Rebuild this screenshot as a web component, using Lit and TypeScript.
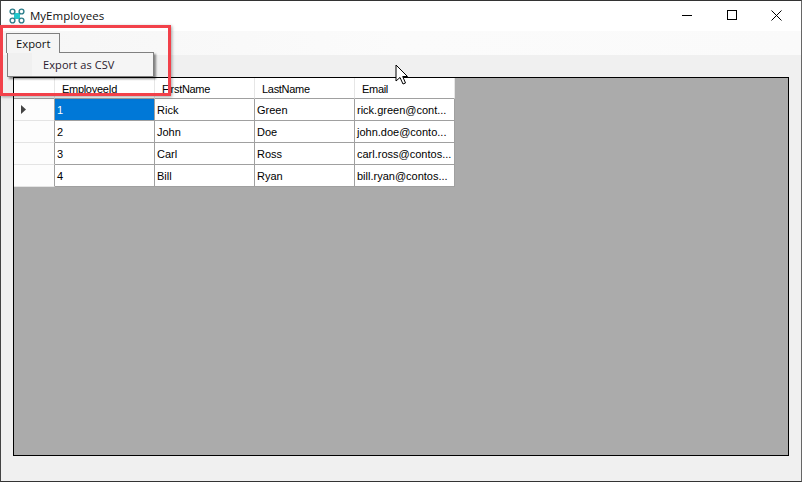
import { LitElement, html, css } from "lit";
import { customElement } from "lit/decorators.js";

const rows = [
  ["1", "Rick", "Green", "rick.green@cont..."],
  ["2", "John", "Doe", "john.doe@conto..."],
  ["3", "Carl", "Ross", "carl.ross@contos..."],
  ["4", "Bill", "Ryan", "bill.ryan@contos..."],
];
const heads = ["EmployeeId", "FirstName", "LastName", "Email"];

@customElement("app-root")
export class AppRoot extends LitElement {
  static styles = css`
    :host { display: block; width: 802px; height: 482px; overflow: hidden; }
    * { box-sizing: border-box; }
    .win { position: relative; width: 802px; height: 482px; display: flex; flex-direction: column;
      background: #f0f0f0; border: 1px solid #555; border-top-color: #333; border-left-color: #444;
      border-bottom-color: #333; border-right-color: #666; }
    .title { height: 30px; flex: none; background: #fff; display: flex; align-items: center; padding-left: 8px;
      font: 11.5px "Open Sans", "Noto Sans", sans-serif; color: #111; }
    .title .ico { width: 16px; height: 16px; margin-right: 5px; flex: none; }
    .title .name { flex: 1; padding-bottom: 1px; }
    .btns { display: flex; margin-right: 2px; }
    .btn { width: 45px; height: 30px; display: flex; align-items: center; justify-content: center; padding-bottom: 2px; }
    .menubar { height: 24px; flex: none; background: linear-gradient(90deg, #f6f6f6, #fbfbfb 50%, #fafafa); }
    .body { flex: 1; padding: 22px 12px 25px 12px; display: flex; min-height: 0; }
    .canvas { flex: 1; background: #ababab; border: 1px solid #000; }
    .grid { display: grid; grid-template-columns: 41px 100px 100px 100px 100px; grid-template-rows: 21px 22px 22px 22px 22px;
      width: 441px; font: 11px "Liberation Sans", Arial, sans-serif; color: #000; }
    .c { background: #fff; border-right: 1px solid #a0a0a0; border-bottom: 1px solid #a0a0a0; display: flex; align-items: center;
      padding-left: 2px; white-space: nowrap; overflow: hidden; }
    .h { background: #fff; padding: 1px 0 0 7px; border-right-color: #e6e6e6; letter-spacing: -0.3px; }
    .rh { background: #fdfdfd; border-bottom-color: #e4e4e4; padding-left: 7px; }
    .corner { border-right-color: #e6e6e6; }
    .sel { background: #0078d7; color: #fff; }
    .rh svg { display: block; }
    .tab { position: absolute; left: 5px; top: 32px; width: 54px; height: 20px; z-index: 3; background: #f5f5f5;
      border: 1px solid #808080; border-bottom: none; font: 11.25px "Open Sans", "Noto Sans", sans-serif; color: #111;
      display: flex; align-items: center; padding-left: 9px; }
    .drop { position: absolute; left: 6px; top: 51px; width: 147px; height: 25px; z-index: 2; background: #f5f5f5;
      border: 1px solid #808080; box-shadow: 2px 2px 2px rgba(0,0,0,.45); display: flex; align-items: center; }
    .gut { width: 24px; height: 100%; background: #f0f0f0; flex: none; }
    .drop .lbl { font: 11px "Open Sans", "Noto Sans", sans-serif; color: #2b1a2e; margin-left: 11px; letter-spacing: .1px; }
    .hl { position: absolute; left: -1px; top: 24px; width: 171px; height: 71px; z-index: 4; border: 3px solid #f2414a;
      box-shadow: 1px 1px 3px rgba(0,0,0,.35); pointer-events: none; }
    .cursor { position: absolute; left: 394px; top: 63px; z-index: 5; }
  `;

  render() {
    return html`<div class="win">
      <div class="title">
        <svg class="ico" viewBox="0 0 16 16">
          <path d="M3.5 3.5 L12.5 12.5 M12.5 3.5 L3.5 12.5" stroke="#1fa5aa" stroke-width="1.8" fill="none"/>
          <rect x="5" y="5" width="6" height="6" fill="#22c8cc"/>
          <circle cx="3.5" cy="3.5" r="2.4" fill="#fff" stroke="#2f7f8c" stroke-width="1.4"/>
          <circle cx="12.5" cy="3.5" r="2.4" fill="#fff" stroke="#2f7f8c" stroke-width="1.4"/>
          <circle cx="3.5" cy="12.5" r="2.4" fill="#fff" stroke="#2f7f8c" stroke-width="1.4"/>
          <circle cx="12.5" cy="12.5" r="2.4" fill="#fff" stroke="#2f7f8c" stroke-width="1.4"/>
        </svg>
        <span class="name">MyEmployees</span>
        <div class="btns">
          <div class="btn"><svg width="10" height="10"><path d="M0 5.5H10" stroke="#000"/></svg></div>
          <div class="btn"><svg width="10" height="10"><rect x=".5" y=".5" width="9" height="9" fill="none" stroke="#000"/></svg></div>
          <div class="btn"><svg width="11" height="11"><path d="M.5 .5L10.5 10.5M10.5 .5L.5 10.5" stroke="#000" fill="none"/></svg></div>
        </div>
      </div>
      <div class="menubar"></div>
      <div class="body">
        <div class="canvas">
          <div class="grid">
            <div class="c h corner"></div>
            ${heads.map((h) => html`<div class="c h">${h}</div>`)}
            ${rows.map((r, i) => html`
              <div class="c rh">${i === 0 ? html`<svg width="5" height="9"><path d="M0 0L5 4.5L0 9Z" fill="#444"/></svg>` : ""}</div>
              ${r.map((v, j) => html`<div class="c ${i === 0 && j === 0 ? "sel" : ""}">${v}</div>`)}
            `)}
          </div>
        </div>
      </div>
      <div class="tab">Export</div>
      <div class="drop"><div class="gut"></div><span class="lbl">Export as CSV</span></div>
      <div class="hl"></div>
      <svg class="cursor" width="14" height="22" viewBox="0 0 14 22">
        <path d="M1 1V17L5 13.5L8 20L10.5 19L7.7 12.5H12.5Z" fill="#fff" stroke="#000" stroke-width="1"/>
      </svg>
    </div>`;
  }
}
